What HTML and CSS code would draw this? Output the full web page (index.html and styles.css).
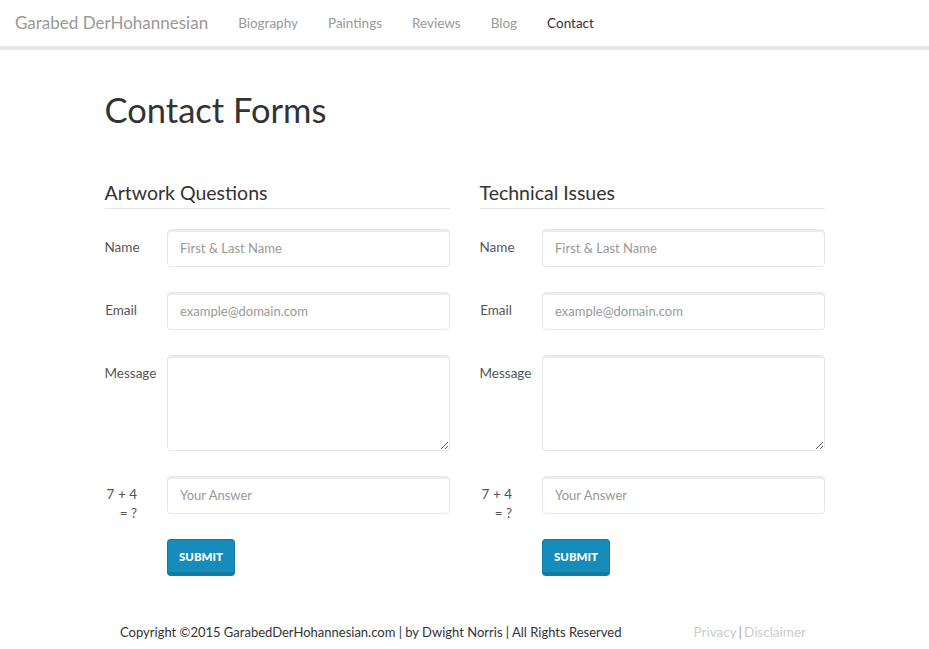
FILE: index.html
```html
<!DOCTYPE html>
<html>
<head>
<meta charset="utf-8">
<title>Contact Forms</title>
<link rel="stylesheet" href="styles.css">
</head>
<body>
<nav class="navbar">
  <div class="nav-inner">
    <a class="brand" href="#">Garabed DerHohannesian</a>
    <ul class="nav">
      <li><a href="#">Biography</a></li>
      <li><a href="#">Paintings</a></li>
      <li><a href="#">Reviews</a></li>
      <li><a href="#">Blog</a></li>
      <li class="active"><a href="#">Contact</a></li>
    </ul>
  </div>
</nav>
<main class="container">
  <h1 class="page-title">Contact Forms</h1>
  <div class="forms">
    <form class="contact-form">
      <div class="legend">Artwork Questions</div>
      <div class="form-group">
        <label class="ctrl-label">Name</label>
        <div class="ctrl"><input class="form-control" type="text" placeholder="First &amp; Last Name"></div>
      </div>
      <div class="form-group">
        <label class="ctrl-label">Email</label>
        <div class="ctrl"><input class="form-control" type="text" placeholder="example@domain.com"></div>
      </div>
      <div class="form-group">
        <label class="ctrl-label">Message</label>
        <div class="ctrl"><textarea class="form-control msg"></textarea></div>
      </div>
      <div class="form-group">
        <label class="ctrl-label">7 + 4 = ?</label>
        <div class="ctrl"><input class="form-control" type="text" placeholder="Your Answer"></div>
      </div>
      <div class="form-group">
        <div class="ctrl offset"><button class="btn" type="button">Submit</button></div>
      </div>
    </form>
    <form class="contact-form">
      <div class="legend">Technical Issues</div>
      <div class="form-group">
        <label class="ctrl-label">Name</label>
        <div class="ctrl"><input class="form-control" type="text" placeholder="First &amp; Last Name"></div>
      </div>
      <div class="form-group">
        <label class="ctrl-label">Email</label>
        <div class="ctrl"><input class="form-control" type="text" placeholder="example@domain.com"></div>
      </div>
      <div class="form-group">
        <label class="ctrl-label">Message</label>
        <div class="ctrl"><textarea class="form-control msg"></textarea></div>
      </div>
      <div class="form-group">
        <label class="ctrl-label">7 + 4 = ?</label>
        <div class="ctrl"><input class="form-control" type="text" placeholder="Your Answer"></div>
      </div>
      <div class="form-group">
        <div class="ctrl offset"><button class="btn" type="button">Submit</button></div>
      </div>
    </form>
  </div>
</main>
<footer class="container footer">
  <div class="copy">Copyright ©2015 GarabedDerHohannesian.com | by Dwight Norris | All Rights Reserved</div>
  <div class="links"><a href="#">Privacy</a><span class="sep">|</span><a href="#">Disclaimer</a></div>
</footer>
</body>
</html>
```

FILE: styles.css
```css
* { box-sizing: border-box; }
html, body { margin: 0; padding: 0; }
body {
  font-family: Lato, "Liberation Sans", sans-serif;
  font-size: 13.5px;
  line-height: 20px;
  color: #555;
  background: #fff;
}
a { text-decoration: none; }

.navbar {
  height: 50px;
  background: #fff;
  border-bottom: 4px solid #e6e6e6;
}
.nav-inner {
  display: flex;
  align-items: center;
  height: 45px;
  padding: 0 15px;
}
.brand {
  font-size: 17px;
  color: #999;
  padding-right: 15px;
  line-height: 20px;
}
.nav {
  display: flex;
  list-style: none;
  margin: 0;
  padding: 0;
}
.nav a {
  display: block;
  padding: 12px 15px;
  color: #999;
  font-size: 13.5px;
}
.nav .active a { color: #333; }

.container {
  width: 720px;
  margin: 0 auto;
}
.page-title {
  font-size: 34.5px;
  font-weight: 400;
  line-height: 40px;
  color: #333;
  margin: 40px 0 48px;
}
.forms {
  display: flex;
  gap: 30px;
}
.contact-form {
  flex: 1;
  margin: 0;
}
.legend {
  font-size: 19.5px;
  line-height: 30px;
  color: #333;
  border-bottom: 1px solid #e5e5e5;
  margin-bottom: 20px;
}
.form-group {
  display: flex;
  align-items: flex-start;
  margin-bottom: 25px;
}
.ctrl-label {
  width: 32.5px;
  height: 38px;
  flex: none;
  text-align: right;
  padding-top: 9px;
  color: #555;
  white-space: normal;
  line-height: 19px;
}
.ctrl {
  flex: 1;
  margin-left: 30px;
}
.ctrl.offset { margin-left: 62.5px; }
.form-control {
  display: block;
  width: 100%;
  height: 38px;
  padding: 8px 12px;
  font-family: inherit;
  font-size: 13px;
  line-height: 20px;
  color: #555;
  background: #fff;
  border: 1px solid #e7e7e7;
  border-radius: 4px;
  box-shadow: inset 0 2px 0 rgba(0, 0, 0, 0.075);
  outline: none;
}
.form-control::placeholder { color: #999; }
.msg {
  height: 96px;
  resize: vertical;
}
.btn {
  display: block;
  height: 37px;
  padding: 0 11px;
  font-family: inherit;
  font-size: 11.5px;
  font-weight: 900;
  text-transform: uppercase;
  color: #fff;
  background: #158cba;
  border: 1px solid #127ba3;
  border-bottom-width: 4px;
  border-radius: 4px;
  cursor: pointer;
}

.footer {
  display: flex;
  align-items: center;
  padding: 21px 0 10px;
  color: #333;
  font-size: 13px;
}
.copy {
  width: 532.5px;
  text-align: center;
}
.links {
  flex: 1;
  text-align: center;
  padding-left: 38px;
  font-size: 13.5px;
  color: #ccc;
}
.links a { color: #ccc; }
.links .sep { color: #999; padding: 0 2px; }
```
